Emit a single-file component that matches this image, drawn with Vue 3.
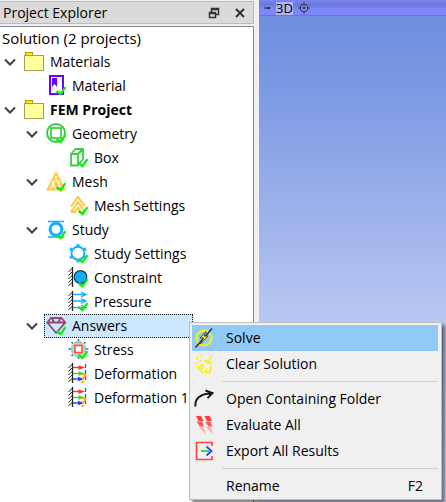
<script setup>
import { ref } from 'vue'

const nodes = [
  { label: 'Materials', level: 1, icon: 'folder', open: true },
  { label: 'Material', level: 2, icon: 'material', ok: true },
  { label: 'FEM Project', level: 1, icon: 'folder', open: true, bold: true },
  { label: 'Geometry', level: 2, icon: 'geometry', open: true, ok: true },
  { label: 'Box', level: 3, icon: 'box', ok: true },
  { label: 'Mesh', level: 2, icon: 'mesh', open: true, ok: true },
  { label: 'Mesh Settings', level: 3, icon: 'mesh-settings', ok: true },
  { label: 'Study', level: 2, icon: 'study', open: true, ok: true },
  { label: 'Study Settings', level: 3, icon: 'study-settings', ok: true },
  { label: 'Constraint', level: 3, icon: 'constraint', ok: true },
  { label: 'Pressure', level: 3, icon: 'pressure', ok: true },
  { label: 'Answers', level: 2, icon: 'answers', open: true, ok: true },
  { label: 'Stress', level: 3, icon: 'stress', ok: true },
  { label: 'Deformation', level: 3, icon: 'deformation', pending: true },
  { label: 'Deformation 1', level: 3, icon: 'deformation', pending: true },
]
const selected = ref('Answers')

const groups = [
  [
    { label: 'Solve', icon: 'solve', active: true },
    { label: 'Clear Solution', icon: 'clear' },
  ],
  [
    { label: 'Open Containing Folder', icon: 'open' },
    { label: 'Evaluate All', icon: 'evaluate' },
    { label: 'Export All Results', icon: 'export' },
  ],
  [{ label: 'Rename', shortcut: 'F2' }],
]
</script>

<template>
  <div class="app">
    <svg class="sprite" aria-hidden="true">
      <symbol id="folder" viewBox="0 0 24 24">
        <rect x="2.5" y="2.5" width="7" height="4" fill="#ffe800" stroke="#a89a20" />
        <rect x="1.5" y="5.5" width="19" height="15" fill="#ffff9c" stroke="#a39c5c" />
      </symbol>
      <symbol id="material" viewBox="0 0 24 24">
        <rect x="5" y="2" width="13" height="18" fill="#fff" stroke="#6a00ff" stroke-width="2" />
        <path d="M7 4h5v9l-2.500-3-2.500 3z" fill="#6a00ff" />
      </symbol>
      <symbol id="geometry" viewBox="0 0 24 24" fill="none" stroke="#36cf42" stroke-width="2">
        <circle cx="11" cy="11" r="9" />
        <rect x="6" y="6" width="10" height="10" stroke-width="1.700" />
      </symbol>
      <symbol id="box" viewBox="0 0 24 24" fill="none" stroke="#36cf42" stroke-width="1.800" stroke-linejoin="round">
        <path d="M4 8h7v11.500H4zM4 8l4.500-5H16l-5 5M16 3v10l-5 6" />
      </symbol>
      <symbol id="mesh" viewBox="0 0 24 24" fill="none" stroke="#ffc83d" stroke-width="1.800">
        <path d="M11 3L2.500 19.500h17z" />
        <path d="M8.200 8.500h5.600M5.300 14h11.400M8.200 8.500l5.600 11M13.800 8.500l-5.600 11M5.300 14l2.900 5.500M16.700 14l-2.900 5.500" stroke-width="1.200" />
      </symbol>
      <symbol id="mesh-settings" viewBox="0 0 24 24" fill="none" stroke="#ffc83d" stroke-width="2">
        <path d="M4 12.500l7-9.500 7 9.500M4 18l7-10 7 10M4 18h4l3-4.500 3 4.500h4" />
      </symbol>
      <symbol id="study" viewBox="0 0 24 24" fill="none" stroke="#12adff">
        <path d="M3 3.500h16M3 19h16" stroke-width="1.600" />
        <circle cx="11" cy="11.200" r="6" stroke-width="3" />
      </symbol>
      <symbol id="study-settings" viewBox="0 0 24 24" fill="none" stroke="#12adff">
        <circle cx="11" cy="11.200" r="6.500" stroke-width="2" />
        <path d="M11 4v-1.800M11 18.500v1.800M4.700 7.600L3 6.600M17.300 7.600l1.700-1M4.700 14.800L3 15.800M17.300 14.800l1.700 1" stroke-width="3" />
      </symbol>
      <symbol id="wall" viewBox="0 0 24 24" fill="none" stroke="#222">
        <path d="M5.500 1v20" stroke-width="1.300" />
        <path d="M5.500 2l-4 4M5.500 5.500l-4 4M5.500 9l-4 4M5.500 12.500l-4 4M5.500 16l-4 4" />
      </symbol>
      <symbol id="constraint" viewBox="0 0 24 24">
        <use href="#wall" />
        <circle cx="13.500" cy="11" r="6.300" fill="#12adff" stroke="#16384f" stroke-width="1.200" />
      </symbol>
      <symbol id="pressure" viewBox="0 0 24 24">
        <use href="#wall" />
        <path d="M6 4.500h13M14 2l5 2.500-5 2.500M6 11h13M14 8.500l5 2.500-5 2.500M6 17.500h13M14 15l5 2.500-5 2.500" fill="none" stroke="#12adff" stroke-width="1.300" />
      </symbol>
      <symbol id="answers" viewBox="0 0 24 24" fill="none" stroke="#944a6e" stroke-width="1.900" stroke-linejoin="round">
        <path d="M6 4h10.500l3.800 4.500-9.100 10.500L2.200 8.500zM2.200 8.500h18M7 4.500l2 3.500M15.500 4.500l-2 3.500" />
      </symbol>
      <symbol id="stress" viewBox="0 0 24 24">
        <path d="M11.500 1v3M11.500 18v3M1.500 11h3M18.500 11h3M4.500 4l1.500 1.500M18.500 4L17 5.500M4.500 18L6 16.500" stroke="#4a55f5" stroke-width="1.500" />
        <path d="M9 3h5l5 5v6l-5 5H9l-5-5V8z" fill="#86e88e" />
        <rect x="6" y="5.500" width="11" height="11" fill="#ffb5b0" />
        <rect x="8" y="7.500" width="7" height="7" fill="#fff" stroke="#ef5358" stroke-width="1.600" />
      </symbol>
      <symbol id="deformation" viewBox="0 0 24 24">
        <use href="#wall" />
        <path d="M18.500 2v18" stroke="#555" stroke-width="1.300" stroke-dasharray="4 2" />
        <path d="M6 5.500h7" stroke="#ff3030" stroke-width="1.400" />
        <path d="M11.500 3.300l6.500 2.200-6.500 2.200z" fill="#ff3030" />
        <path d="M6 11.500h7" stroke="#35d935" stroke-width="1.400" />
        <path d="M11.500 9.300l6.500 2.200-6.500 2.200z" fill="#35d935" />
        <path d="M6 17h7" stroke="#2838ff" stroke-width="1.400" />
        <path d="M11 14.800l6 2.200-6 2.200z" fill="#2838ff" />
      </symbol>
      <symbol id="ok" viewBox="0 0 24 24">
        <path d="M11.500 17l4 3.200 5-7" fill="none" stroke="#0bf00b" stroke-width="2.300" />
      </symbol>
      <symbol id="solve" viewBox="0 0 24 24">
        <circle cx="12" cy="12" r="7.500" fill="none" stroke="#f6f500" stroke-width="2" />
        <path d="M3.500 21.500L20 2.500" stroke="#222" stroke-width="1.200" />
        <path d="M14 5.500l-6 6.500h3.500l-3 6 7.500-8h-4z" fill="#f0e800" stroke="#443" stroke-width="0.900" />
      </symbol>
      <symbol id="clear" viewBox="0 0 24 24">
        <g fill="none" stroke="#fff01c" stroke-width="1.800">
          <path d="M19.500 3.500L17 8.500M12.500 8.500l7 2.500M11 12c-1 2-3 3-5.500 3l4.500 5 8 .5 1-7" />
          <path d="M9 17l3-2M13 20l2-3.500" />
        </g>
        <path d="M4 5h2.500v2.500H4zM7.500 8h2v2h-2zM8 4h1.500v1.500H8zM3.500 10.500h2v2h-2zM14 7.500l6 2.500-.5 2.500-7-2.500z" fill="#fff01c" />
      </symbol>
      <symbol id="open" viewBox="0 0 24 24" fill="none" stroke="#161616" stroke-width="1.900">
        <path d="M3.500 19.500C2.500 12 8 6.500 19.500 6.500M13.500 3.500l7 2.700-5 5" />
      </symbol>
      <symbol id="evaluate" viewBox="0 0 24 24">
        <g fill="#ff3a3a">
          <path d="M4 3h5l2.500 5H6.500zM12.500 3h5l2.500 5h-5z" />
          <path d="M4.500 8.500h5.500l2 5H8zM13 8.500h5.500l2 5h-4z" fill="#ff5c5c" />
          <path d="M6.500 13.500h4.500l3 8zM14 13.500h4.500l2.500 8z" fill="#ffa6a6" />
        </g>
      </symbol>
      <symbol id="export" viewBox="0 0 24 24" fill="none">
        <path d="M20 7V3.500H4.500v17H20V17" stroke="#ff4040" stroke-width="1.600" />
        <path d="M9 12h8" stroke="#20e02c" stroke-width="1.800" />
        <path d="M14.500 7.500L19.500 12l-5 4.500" stroke="#3838f5" stroke-width="1.700" />
      </symbol>
    </svg>

    <section class="explorer">
      <header class="title">
        <span class="caption">Project Explorer</span>
        <button class="tool" aria-label="Float">
          <svg width="12" height="12" viewBox="0 0 12 12" fill="none" stroke="#333">
            <path d="M3.500 5V1.500h7v6H8M3.500 2.500h7" stroke-width="1.500" />
            <path d="M1.500 5.500h6v5h-6zM1.500 6.500h6" stroke-width="1.500" />
          </svg>
        </button>
        <button class="tool" aria-label="Close">
          <svg width="12" height="12" viewBox="0 0 12 12" stroke="#333" stroke-width="2"><path d="M2 2l8 8M10 2l-8 8" /></svg>
        </button>
      </header>
      <div class="tree" role="tree">
        <div class="root">Solution (2 projects)</div>
        <div
          v-for="node in nodes"
          :key="node.label"
          class="row"
          :class="'level-' + node.level"
          role="treeitem"
          @click="selected = node.label"
        >
          <span class="toggle">
            <svg v-if="node.open" width="12" height="8" viewBox="0 0 12 8" fill="none" stroke="#404040" stroke-width="2"><path d="M1 1.500l5 5 5-5" /></svg>
          </span>
          <span class="item" :class="{ selected: node.label === selected, bold: node.bold }">
            <svg class="icon" viewBox="0 0 24 24" aria-hidden="true">
              <use :href="'#' + node.icon" />
              <use v-if="node.ok" href="#ok" />
              <text v-if="node.pending" class="pending" x="13" y="21">?</text>
            </svg>
            <span>{{ node.label }}</span>
          </span>
        </div>
      </div>
    </section>

    <main class="viewport">
      <div class="view-bar">
        <svg width="8" height="8" viewBox="0 0 8 8"><path d="M1 4h3M4 3.500h3v1H4z" fill="#334" stroke="#334" /></svg>
        <span class="mode">3D</span>
        <svg width="12" height="12" viewBox="0 0 12 12" fill="none" stroke="#334">
          <rect x="2.500" y="2.500" width="7" height="7" rx="2" /><circle cx="6" cy="6" r="1" />
          <path d="M6 0v3M6 9v3M0 6h3M9 6h3" />
        </svg>
      </div>
    </main>

    <div class="menu" role="menu">
      <div v-for="(group, i) in groups" :key="i" class="group">
        <button v-for="item in group" :key="item.label" class="entry" :class="{ active: item.active }" role="menuitem">
          <svg class="icon" aria-hidden="true"><use v-if="item.icon" :href="'#' + item.icon" /></svg>
          <span class="entry-label">{{ item.label }}</span>
          <span v-if="item.shortcut" class="shortcut">{{ item.shortcut }}</span>
        </button>
      </div>
    </div>
  </div>
</template>

<style>
body {
  margin: 0;
}
</style>

<style scoped>
.app {
  position: relative;
  display: grid;
  grid-template-columns: 254px 1fr;
  column-gap: 5px;
  min-height: 100vh;
  overflow: hidden;
  background: #f0f0f0;
  color: #000;
  font-family: 'Open Sans', 'Noto Sans', sans-serif;
  font-size: 14px;
  line-height: 22px;
  white-space: nowrap;
}
.sprite {
  position: absolute;
  width: 0;
  height: 0;
}
button {
  border: 0;
  padding: 0;
  background: none;
  color: inherit;
  font: inherit;
}
.explorer {
  display: flex;
  flex-direction: column;
  padding-top: 1px;
}
.title {
  display: flex;
  align-items: center;
  height: 21px;
  margin-bottom: 2px;
  padding: 0 7px 0 3px;
  border: 1px solid #bcbcbc;
  border-left: 0;
  background: #dadada;
}
.caption {
  flex: 1;
}
.tool {
  display: flex;
  margin-left: 14px;
}
.tree {
  flex: 1;
  border: 1px solid #828790;
  border-width: 1px 1px 0 0;
  background: #fff;
}
.root {
  padding-left: 2px;
  font-size: 15px;
  line-height: 23px;
}
.row {
  display: flex;
  height: 24px;
}
.level-1 {
  padding-left: 4px;
}
.level-2 {
  padding-left: 26px;
}
.level-3 {
  padding-left: 48px;
}
.toggle {
  display: flex;
  flex: none;
  align-items: center;
  width: 18px;
}
.item {
  display: flex;
  flex: 1;
  gap: 3px;
  align-items: center;
  padding-left: 1px;
  margin-right: 60px;
}
.selected {
  background: #cce8ff;
  outline: 1px dotted #111;
  outline-offset: -1px;
}
.bold {
  font-weight: 700;
}
.icon {
  flex: none;
  width: 24px;
  height: 24px;
}
.pending {
  fill: #ffa000;
  font-size: 14px;
  font-weight: 700;
}
.viewport {
  background: linear-gradient(#6b8bdc, #7f9be4 20%, #b9c8f1 64%, #d8defa);
}
.view-bar {
  display: flex;
  box-sizing: border-box;
  align-items: center;
  gap: 5px;
  height: 16px;
  padding-left: 4px;
  border-bottom: 1px solid #6a74cc;
  background: linear-gradient(#7a86f6, #6c78d4 30%, #7c88f8 60%, #7c86fa);
}
.mode {
  align-self: flex-end;
  background: #adb5fa;
  font-size: 13px;
  line-height: 13px;
}
.menu {
  position: absolute;
  left: 189px;
  top: 322px;
  box-sizing: border-box;
  width: 253px;
  padding: 2px 3px 0 2px;
  border: 1px solid #bdbdbd;
  background: #f0f0f0;
  box-shadow: 3px 3px 3px rgba(0, 0, 0, 0.5);
}
.group + .group::before {
  content: '';
  display: block;
  height: 1px;
  margin: 4px 0 4px 30px;
  background: #d0d0d0;
}
.entry {
  display: flex;
  align-items: center;
  width: 100%;
  height: 26px;
  text-align: left;
}
.entry-label {
  flex: 1;
  padding-left: 10px;
}
.shortcut {
  padding-right: 15px;
}
.active {
  background: #91c9f7;
}
</style>
